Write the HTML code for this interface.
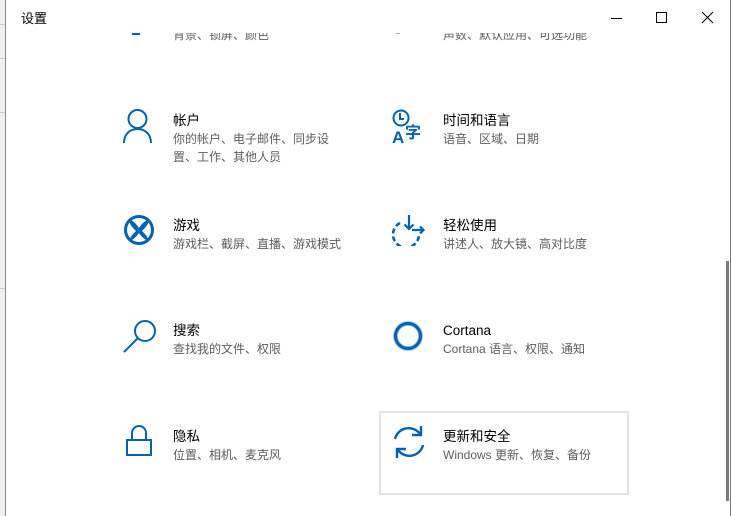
<!DOCTYPE html>
<html><head><meta charset="utf-8"><style>
*{margin:0;padding:0;box-sizing:border-box}
body{width:731px;height:516px;overflow:hidden;background:#f0f0f0;position:relative;font-family:"Liberation Sans","Noto Sans CJK SC",sans-serif}
#win{position:absolute;left:5px;top:0;width:726px;height:516px;background:#fff;border-left:1px solid #888;border-right:1px solid #777}
.a{position:absolute}
.t{position:absolute;font-size:13.5px;color:#000;white-space:nowrap;line-height:18px;margin-top:1px}
.s{position:absolute;font-size:12px;color:#5d5d5d;white-space:nowrap;line-height:18px;margin-top:1px}
svg{position:absolute}
</style></head><body>
<div class="a" style="left:0;top:24px;width:5px;height:1px;background:#ccc"></div>
<div class="a" style="left:0;top:58px;width:5px;height:1px;background:#ccc"></div>
<div class="a" style="left:0;top:112px;width:5px;height:1px;background:#ccc"></div>
<div class="a" style="left:0;top:288px;width:5px;height:1px;background:#ccc"></div>
<div id="win">
<div class="t" style="left:15px;top:9px;font-size:13px">设置</div>
<svg style="left:600px;top:9px" width="120" height="18" viewBox="0 0 120 18"><path d="M5 9.5h11" stroke="#000" stroke-width="1"/><rect x="50.5" y="3.5" width="10" height="10" fill="none" stroke="#000"/><path d="M96 3l11 11M107 3L96 14" stroke="#000"/></svg>
<div class="a" style="left:0;top:33px;width:720px;height:9px;overflow:hidden">
 <div class="s" style="left:167px;top:-8px">背景、锁屏、颜色</div>
 <div class="s" style="left:437px;top:-8px">声数、默认应用、可选功能</div>
 <div class="a" style="left:126px;top:0;width:8px;height:2px;background:#0063b1"></div>
 <div class="a" style="left:390px;top:0;width:4px;height:1px;background:#8ab4d8"></div>
</div>
<svg style="left:117px;top:109px" width="30" height="34" viewBox="0 0 30 34"><circle cx="14.5" cy="10" r="9" fill="none" stroke="#0063b1" stroke-width="2"/><path d="M1 34c0-9 6-14 13.5-14S28 25 28 34" fill="none" stroke="#0063b1" stroke-width="2"/></svg>
<div class="t" style="left:167px;top:111px">帐户</div>
<div class="s" style="left:167px;top:129px">你的帐户、电子邮件、同步设<br>置、工作、其他人员</div>
<svg style="left:386px;top:109px" width="36" height="36" viewBox="0 0 36 36"><circle cx="9" cy="9" r="7.5" fill="none" stroke="#0063b1" stroke-width="2"/><path d="M8 4v6h4" fill="none" stroke="#0063b1" stroke-width="2"/><text x="0" y="34" font-size="17" font-weight="bold" fill="#0063b1" font-family="Liberation Sans">A</text><text x="13" y="29" font-size="16" font-weight="bold" fill="#0063b1" font-family="Noto Sans CJK SC">字</text></svg>
<div class="t" style="left:437px;top:111px">时间和语言</div>
<div class="s" style="left:437px;top:129px">语音、区域、日期</div>
<svg style="left:117px;top:214px" width="32" height="32" viewBox="0 0 32 32"><circle cx="16" cy="16" r="13.5" fill="none" stroke="#0063b1" stroke-width="3"/><path d="M7 6c4 1 7 5 9 8 2-3 5-7 9-8 2 3-3 8-6 11 3 3 7 7 6 10-3-1-7-5-9-8-2 3-6 7-9 8-1-3 3-7 6-10-3-3-8-8-6-11z" fill="#0063b1"/></svg>
<div class="t" style="left:167px;top:216px">游戏</div>
<div class="s" style="left:167px;top:234px">游戏栏、截屏、直播、游戏模式</div>
<svg style="left:386px;top:214px" width="34" height="32" viewBox="0 0 34 32"><path d="M8 9A13 13 0 1 0 27 21" fill="none" stroke="#0063b1" stroke-width="2.6" stroke-dasharray="5 3"/><path d="M17 1v14M12.5 10.5l4.5 4.5 4.5-4.5M20 16h11M28 12.5l3.5 3.5-3.5 3.5" fill="none" stroke="#0063b1" stroke-width="2.2"/></svg>
<div class="t" style="left:437px;top:216px">轻松使用</div>
<div class="s" style="left:437px;top:234px">讲述人、放大镜、高对比度</div>
<svg style="left:117px;top:319px" width="34" height="34" viewBox="0 0 34 34"><circle cx="22" cy="12" r="10" fill="none" stroke="#0063b1" stroke-width="2"/><path d="M15 19L1 33" stroke="#0063b1" stroke-width="2"/></svg>
<div class="t" style="left:167px;top:321px">搜索</div>
<div class="s" style="left:167px;top:339px">查找我的文件、权限</div>
<svg style="left:386px;top:320px" width="32" height="32" viewBox="0 0 32 32"><circle cx="16" cy="16" r="12.5" fill="none" stroke="#a9c9e6" stroke-width="5"/><circle cx="16" cy="16" r="12.5" fill="none" stroke="#0063b1" stroke-width="3"/></svg>
<div class="t" style="left:437px;top:321px">Cortana</div>
<div class="s" style="left:437px;top:339px">Cortana 语言、权限、通知</div>
<svg style="left:119px;top:425px" width="28" height="32" viewBox="0 0 28 32"><path d="M7 15V8a7 7 0 0 1 14 0v7" fill="none" stroke="#0063b1" stroke-width="2"/><rect x="2" y="15" width="24" height="15" fill="none" stroke="#0063b1" stroke-width="2"/></svg>
<div class="t" style="left:167px;top:427px">隐私</div>
<div class="s" style="left:167px;top:445px">位置、相机、麦克风</div>
<div class="a" style="left:373px;top:411px;width:250px;height:84px;border:2px solid #e3e3e3"></div>
<svg style="left:386px;top:425px" width="34" height="34" viewBox="0 0 34 34"><path d="M3 14A14 14 0 0 1 28 9" fill="none" stroke="#0063b1" stroke-width="2.4"/><path d="M29 1v9h-9" fill="none" stroke="#0063b1" stroke-width="2.4"/><path d="M31 20A14 14 0 0 1 6 25" fill="none" stroke="#0063b1" stroke-width="2.4"/><path d="M5 33v-9h9" fill="none" stroke="#0063b1" stroke-width="2.4"/></svg>
<div class="t" style="left:437px;top:427px">更新和安全</div>
<div class="s" style="left:437px;top:445px">Windows 更新、恢复、备份</div>
<div class="a" style="left:720px;top:261px;width:3px;height:240px;background:#7a7a7a"></div>
</div>
</body></html>
